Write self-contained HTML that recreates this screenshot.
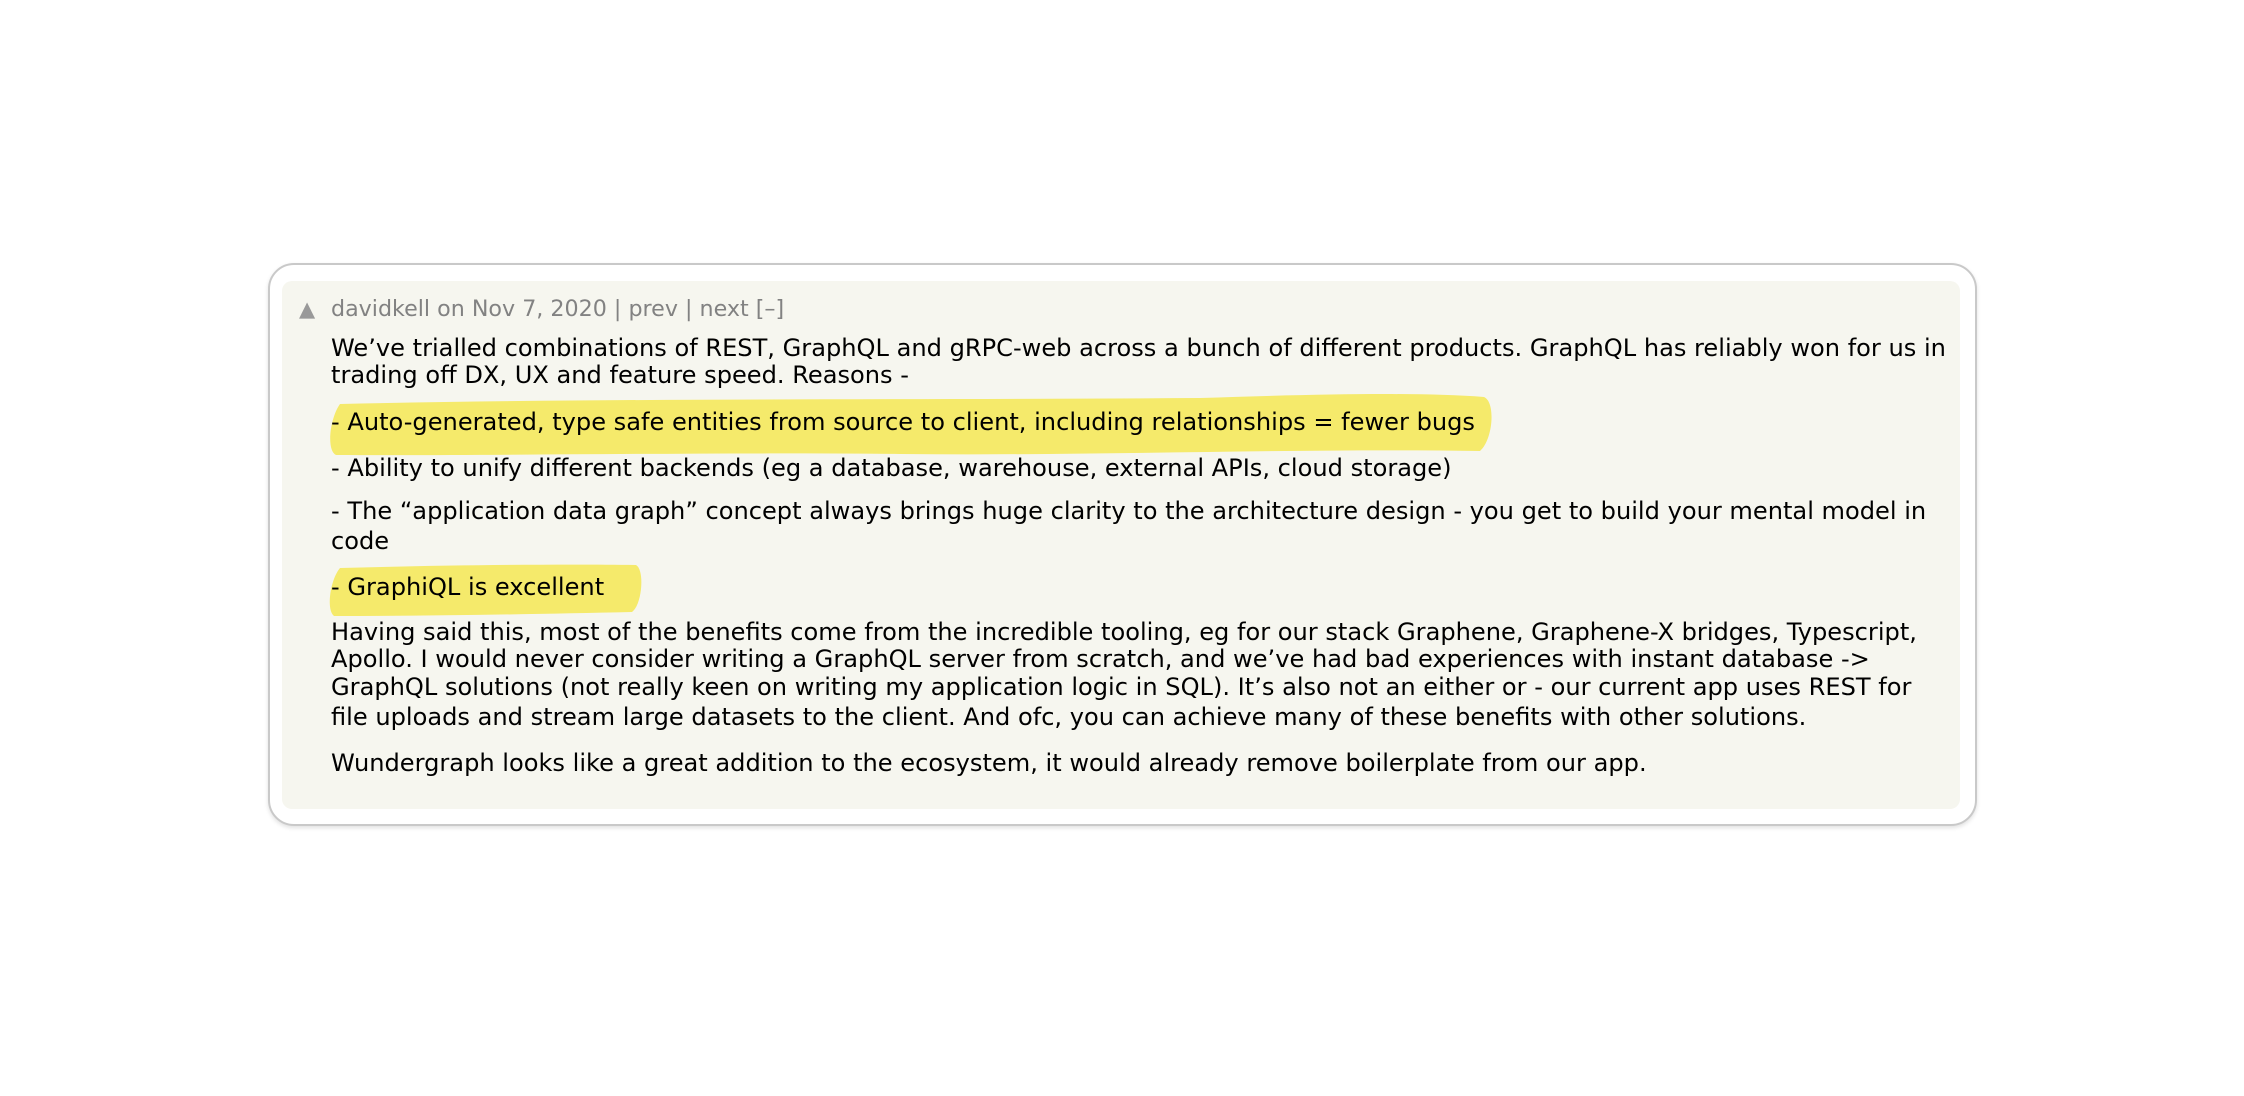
<!DOCTYPE html>
<html><head><meta charset="utf-8"><style>
html,body{margin:0;padding:0;background:#fff;width:2244px;height:1096px;overflow:hidden;position:relative}
.card{position:absolute;left:268px;top:263px;width:1705px;height:559px;border:2px solid #c9c9c9;border-radius:26px;box-shadow:0 2px 4px rgba(0,0,0,0.12);background:#fff}
.inner{position:absolute;left:282px;top:281px;width:1678px;height:528px;background:#f6f6ef;border-radius:10px}
.l{position:absolute;left:331px;white-space:nowrap;font-family:"DejaVu Sans","Liberation Sans",sans-serif;font-size:24.1px;line-height:28px;color:#000;letter-spacing:0}
.h{color:#828282;font-size:22.2px}
svg{position:absolute;left:0;top:0}
</style></head><body>
<div class="card"></div>
<div class="inner"></div>
<svg width="2244" height="1096">
<path d="M340 404 C600 398 900 400 1200 398 C1320 394 1420 392 1484 397 C1496 402 1493 440 1480 451 C1300 448 1100 456 900 454 C700 452 500 456 336 455 C326 450 330 418 340 404 Z" fill="#f5ea6b"/>
<path d="M340 568 C450 565 560 564 636 565 C645 570 642 605 632 612 C540 614 440 616 334 616 C326 610 330 580 340 568 Z" fill="#f5ea6b"/>
</svg>
<div class="l h" style="left:299px;top:295px;font-size:21px;color:#999">▲</div>
<div class="l h" style="top:295px">davidkell on Nov 7, 2020 | prev | next [–]</div>
<div class="l" style="top:334px">We’ve trialled combinations of REST, GraphQL and gRPC-web across a bunch of different products. GraphQL has reliably won for us in</div>
<div class="l" style="top:361px">trading off DX, UX and feature speed. Reasons -</div>
<div class="l" style="top:408px">- Auto-generated, type safe entities from source to client, including relationships = fewer bugs</div>
<div class="l" style="top:454px">- Ability to unify different backends (eg a database, warehouse, external APIs, cloud storage)</div>
<div class="l" style="top:497px">- The “application data graph” concept always brings huge clarity to the architecture design - you get to build your mental model in</div>
<div class="l" style="top:527px">code</div>
<div class="l" style="top:573px">- GraphiQL is excellent</div>
<div class="l" style="top:618px">Having said this, most of the benefits come from the incredible tooling, eg for our stack Graphene, Graphene-X bridges, Typescript,</div>
<div class="l" style="top:645px">Apollo. I would never consider writing a GraphQL server from scratch, and we’ve had bad experiences with instant database -&gt;</div>
<div class="l" style="top:673px">GraphQL solutions (not really keen on writing my application logic in SQL). It’s also not an either or - our current app uses REST for</div>
<div class="l" style="top:703px">file uploads and stream large datasets to the client. And ofc, you can achieve many of these benefits with other solutions.</div>
<div class="l" style="top:749px">Wundergraph looks like a great addition to the ecosystem, it would already remove boilerplate from our app.</div>
</body></html>
